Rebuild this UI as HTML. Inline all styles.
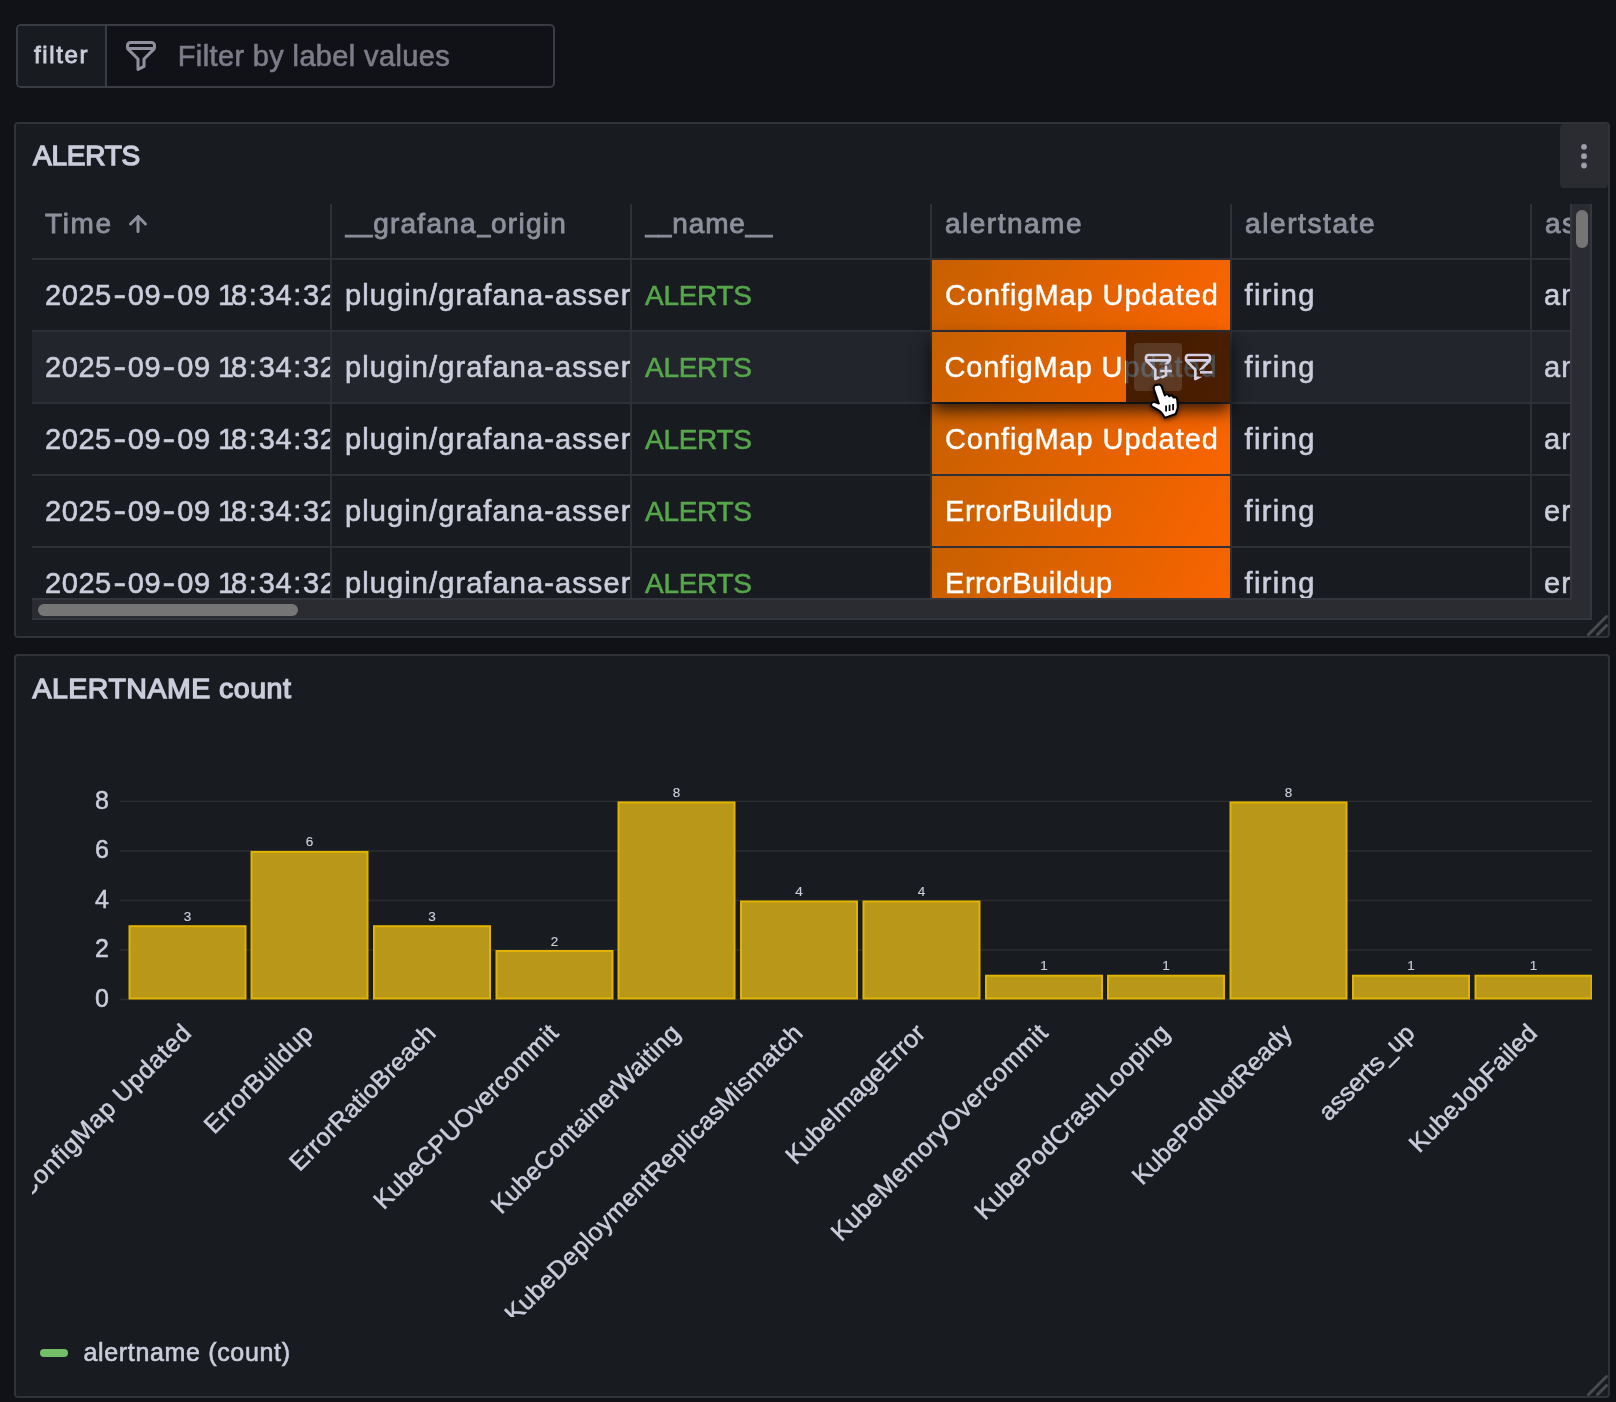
<!DOCTYPE html>
<html lang="en">
<head>
<meta charset="utf-8">
<title>ALERTS</title>
<style>
*{box-sizing:border-box;margin:0;padding:0}
html,body{width:1616px;height:1402px;overflow:hidden;background:#111217}
body{position:relative;will-change:transform;font-family:"Liberation Sans",sans-serif;color:#ccccdc}
.abs{position:absolute}
.t{position:absolute;white-space:nowrap;line-height:1;-webkit-text-stroke:0.6px currentColor}
.m{-webkit-text-stroke:0.85px currentColor}
.tt{-webkit-text-stroke:1.35px currentColor}
.or .t{-webkit-text-stroke:0.4px currentColor}
.hy{display:inline-block;transform:scaleX(1.3);margin:0 2.9px}.co{margin:0 1.2px}.n1{margin-right:-3.8px}
#fbox{left:16px;top:24px;width:539px;height:64px;border:2px solid #3a3c43;border-radius:5px;background:#111217}
#flabel{left:0;top:0;width:89px;height:60px;background:#181b1f;border-right:2px solid #3a3c43;border-radius:3px 0 0 3px}
.panel{position:absolute;left:14px;width:1596px;background:#181b1f;border:2px solid #2f3237;border-radius:4px}
#p1{top:122px;height:516px}
#p2{top:654px;height:744px}
#tbl{left:32px;top:204px;width:1538px;height:394px;overflow:hidden}
.vline{position:absolute;top:0;width:2px;height:394px;background:#2e3036}
.hline{position:absolute;left:0;width:1538px;height:2px;background:#2e3036}
.row{position:absolute;left:0;width:1538px;height:70px}
.hd{color:#8f8f9d}
.u{display:inline-block;transform:scaleX(.83);margin:0 -1.4px;position:relative;top:-2.5px}
.c{color:#ccccdc}
.cell{position:absolute;top:0;height:70px;overflow:hidden}
.g{color:#56a64b}
.or{background:linear-gradient(120deg,#c76000,#fa6400)}
.or .t{color:#fff}
</style>
</head>
<body>
<div id="fbox" class="abs">
<div id="flabel" class="abs"></div>
<div class="t m" style="left:16px;top:17px;font-size:24px;letter-spacing:1.65px;color:#ccccdc;">filter</div>
<svg class="abs" style="left:105px;top:12px" width="36" height="36" viewBox="0 0 24 24"><path fill="#8f8f9d" d="M19,2H5A3,3,0,0,0,2,5V6.17a3,3,0,0,0,.25,1.2l0,.06a2.81,2.81,0,0,0,.59.86L9,14.41V21a1,1,0,0,0,.47.85A1,1,0,0,0,10,22a1,1,0,0,0,.45-.11l4-2A1,1,0,0,0,15,19V14.41l6.12-6.12a2.81,2.81,0,0,0,.59-.86l0-.06A3,3,0,0,0,22,6.17V5A3,3,0,0,0,19,2ZM13.29,13.29A1,1,0,0,0,13,14v4.38l-2,1V14a1,1,0,0,0-.29-.71L5.41,8H18.59ZM20,6H4V5A1,1,0,0,1,5,4H19a1,1,0,0,1,1,1Z"/></svg>
<div class="t " style="left:159.8px;top:15.5px;font-size:29px;letter-spacing:0.36px;color:#7d7d8a;">Filter by label values</div>
</div>
<div id="p1" class="panel"></div>
<div class="t tt" style="left:33px;top:142px;font-size:28px;letter-spacing:-0.25px;">ALERTS</div>
<div class="abs" style="left:1560px;top:124px;width:48px;height:64px;background:#2a2c32;border-radius:4px 3px 4px 4px"></div>
<svg class="abs" style="left:1572px;top:140px" width="24" height="32" viewBox="0 0 24 32"><g fill="#9d9dab"><circle cx="12" cy="6.8" r="2.9"/><circle cx="12" cy="16.2" r="2.9"/><circle cx="12" cy="25.5" r="2.9"/></g></svg>
<div id="tbl" class="abs">
<div class="abs" style="left:0;top:128px;width:1538px;height:70px;background:#22252b"></div>
<div class="cell" style="left:0px;width:298px;height:54px"><div class="t hd m" style="left:13px;top:6px;font-size:28px;letter-spacing:1.6px;">Time</div></div>
<div class="cell" style="left:300px;width:298px;height:54px"><div class="t hd m" style="left:13px;top:6px;font-size:28px;letter-spacing:1.26px;"><span class="u">_</span><span class="u">_</span>grafana<span class="u">_</span>origin</div></div>
<div class="cell" style="left:600px;width:298px;height:54px"><div class="t hd m" style="left:13px;top:6px;font-size:28px;letter-spacing:0.85px;"><span class="u">_</span><span class="u">_</span>name<span class="u">_</span><span class="u">_</span></div></div>
<div class="cell" style="left:900px;width:298px;height:54px"><div class="t hd m" style="left:13px;top:6px;font-size:28px;letter-spacing:1.5px;">alertname</div></div>
<div class="cell" style="left:1200px;width:298px;height:54px"><div class="t hd m" style="left:13px;top:6px;font-size:28px;letter-spacing:1.6px;">alertstate</div></div>
<div class="cell" style="left:1500px;width:298px;height:54px"><div class="t hd m" style="left:13px;top:6px;font-size:28px;letter-spacing:1.4px;">asserts<span class="u">_</span>alert<span class="u">_</span>category</div></div>
<svg class="abs" style="left:88px;top:2px" width="36" height="36" viewBox="0 0 24 24"><path fill="#8f8f9d" d="M17.71,11.29l-5-5a1,1,0,0,0-.33-.21,1,1,0,0,0-.76,0,1,1,0,0,0-.33.21l-5,5a1,1,0,0,0,1.42,1.42L11,9.41V17a1,1,0,0,0,2,0V9.41l3.29,3.3a1,1,0,0,0,1.42,0A1,1,0,0,0,17.71,11.29Z"/></svg>
<div class="row" style="top:56px">
<div class="cell" style="left:0px;width:298px"><div class="t c" style="left:13px;top:21px;font-size:29px;letter-spacing:0.57px;word-spacing:-1.2px;">2025<span class="hy">-</span>09<span class="hy">-</span>09 <span class="n1">1</span>8<span class="co">:</span>34<span class="co">:</span>32</div></div>
<div class="cell" style="left:300px;width:298px"><div class="t c" style="left:13px;top:21px;font-size:29px;letter-spacing:1.1px;">plugin/grafana-asserts-app</div></div>
<div class="cell" style="left:600px;width:298px"><div class="t c g" style="left:13px;top:22px;font-size:28px;letter-spacing:-0.3px;">ALERTS</div></div>
<div class="cell or" style="left:900px;width:298px"><div class="t c" style="left:13px;top:21px;font-size:29px;letter-spacing:0.93px;">ConfigMap Updated</div></div>
<div class="cell" style="left:1200px;width:298px"><div class="t c" style="left:12.5px;top:21px;font-size:29px;letter-spacing:1.39px;">firing</div></div>
<div class="cell" style="left:1500px;width:298px"><div class="t c" style="left:12px;top:21px;font-size:29px;letter-spacing:1.2px;">amend</div></div>
</div>
<div class="row" style="top:128px">
<div class="cell" style="left:0px;width:298px"><div class="t c" style="left:13px;top:21px;font-size:29px;letter-spacing:0.57px;word-spacing:-1.2px;">2025<span class="hy">-</span>09<span class="hy">-</span>09 <span class="n1">1</span>8<span class="co">:</span>34<span class="co">:</span>32</div></div>
<div class="cell" style="left:300px;width:298px"><div class="t c" style="left:13px;top:21px;font-size:29px;letter-spacing:1.1px;">plugin/grafana-asserts-app</div></div>
<div class="cell" style="left:600px;width:298px"><div class="t c g" style="left:13px;top:22px;font-size:28px;letter-spacing:-0.3px;">ALERTS</div></div>
<div class="cell or" style="left:900px;width:298px"><div class="t c" style="left:13px;top:21px;font-size:29px;letter-spacing:0.93px;">ConfigMap Updated</div></div>
<div class="cell" style="left:1200px;width:298px"><div class="t c" style="left:12.5px;top:21px;font-size:29px;letter-spacing:1.39px;">firing</div></div>
<div class="cell" style="left:1500px;width:298px"><div class="t c" style="left:12px;top:21px;font-size:29px;letter-spacing:1.2px;">amend</div></div>
</div>
<div class="row" style="top:200px">
<div class="cell" style="left:0px;width:298px"><div class="t c" style="left:13px;top:21px;font-size:29px;letter-spacing:0.57px;word-spacing:-1.2px;">2025<span class="hy">-</span>09<span class="hy">-</span>09 <span class="n1">1</span>8<span class="co">:</span>34<span class="co">:</span>32</div></div>
<div class="cell" style="left:300px;width:298px"><div class="t c" style="left:13px;top:21px;font-size:29px;letter-spacing:1.1px;">plugin/grafana-asserts-app</div></div>
<div class="cell" style="left:600px;width:298px"><div class="t c g" style="left:13px;top:22px;font-size:28px;letter-spacing:-0.3px;">ALERTS</div></div>
<div class="cell or" style="left:900px;width:298px"><div class="t c" style="left:13px;top:21px;font-size:29px;letter-spacing:0.93px;">ConfigMap Updated</div></div>
<div class="cell" style="left:1200px;width:298px"><div class="t c" style="left:12.5px;top:21px;font-size:29px;letter-spacing:1.39px;">firing</div></div>
<div class="cell" style="left:1500px;width:298px"><div class="t c" style="left:12px;top:21px;font-size:29px;letter-spacing:1.2px;">amend</div></div>
</div>
<div class="row" style="top:272px">
<div class="cell" style="left:0px;width:298px"><div class="t c" style="left:13px;top:21px;font-size:29px;letter-spacing:0.57px;word-spacing:-1.2px;">2025<span class="hy">-</span>09<span class="hy">-</span>09 <span class="n1">1</span>8<span class="co">:</span>34<span class="co">:</span>32</div></div>
<div class="cell" style="left:300px;width:298px"><div class="t c" style="left:13px;top:21px;font-size:29px;letter-spacing:1.1px;">plugin/grafana-asserts-app</div></div>
<div class="cell" style="left:600px;width:298px"><div class="t c g" style="left:13px;top:22px;font-size:28px;letter-spacing:-0.3px;">ALERTS</div></div>
<div class="cell or" style="left:900px;width:298px"><div class="t c" style="left:13px;top:21px;font-size:29px;letter-spacing:0.55px;">ErrorBuildup</div></div>
<div class="cell" style="left:1200px;width:298px"><div class="t c" style="left:12.5px;top:21px;font-size:29px;letter-spacing:1.39px;">firing</div></div>
<div class="cell" style="left:1500px;width:298px"><div class="t c" style="left:12px;top:21px;font-size:29px;letter-spacing:1.2px;">error</div></div>
</div>
<div class="row" style="top:344px">
<div class="cell" style="left:0px;width:298px"><div class="t c" style="left:13px;top:21px;font-size:29px;letter-spacing:0.57px;word-spacing:-1.2px;">2025<span class="hy">-</span>09<span class="hy">-</span>09 <span class="n1">1</span>8<span class="co">:</span>34<span class="co">:</span>32</div></div>
<div class="cell" style="left:300px;width:298px"><div class="t c" style="left:13px;top:21px;font-size:29px;letter-spacing:1.1px;">plugin/grafana-asserts-app</div></div>
<div class="cell" style="left:600px;width:298px"><div class="t c g" style="left:13px;top:22px;font-size:28px;letter-spacing:-0.3px;">ALERTS</div></div>
<div class="cell or" style="left:900px;width:298px"><div class="t c" style="left:13px;top:21px;font-size:29px;letter-spacing:0.55px;">ErrorBuildup</div></div>
<div class="cell" style="left:1200px;width:298px"><div class="t c" style="left:12.5px;top:21px;font-size:29px;letter-spacing:1.39px;">firing</div></div>
<div class="cell" style="left:1500px;width:298px"><div class="t c" style="left:12px;top:21px;font-size:29px;letter-spacing:1.2px;">error</div></div>
</div>
<div class="hline" style="top:54px"></div>
<div class="hline" style="top:126px"></div>
<div class="hline" style="top:198px"></div>
<div class="hline" style="top:270px"></div>
<div class="hline" style="top:342px"></div>
<div class="hline" style="top:414px"></div>
<div class="vline" style="left:298px"></div>
<div class="vline" style="left:598px"></div>
<div class="vline" style="left:898px"></div>
<div class="vline" style="left:1198px"></div>
<div class="vline" style="left:1498px"></div>
<div class="abs" style="left:900px;top:128px;width:298px;height:70px;box-shadow:0 8px 16px rgba(1,4,9,.8)"></div>
<div class="cell or" style="left:900px;top:128px;width:298px"><div class="t c" style="left:12.5px;top:21px;font-size:29px;letter-spacing:0.88px;">ConfigMap Updated</div><div class="abs" style="left:194px;top:0;width:104px;height:70px;background:rgba(0,0,0,.7)"></div><div class="abs" style="left:202px;top:11px;width:48px;height:48px;border-radius:4px;background:rgba(204,204,220,.16)"></div><svg class="abs" style="left:210px;top:19px" width="32" height="32" viewBox="0 0 24 24"><defs><clipPath id="cp"><path d="M0,0H24V10.2H12.3V19.3H24V24H0Z"/></clipPath></defs><path clip-path="url(#cp)" fill="#d2d2e4" d="M19,2H5A3,3,0,0,0,2,5V6.17a3,3,0,0,0,.25,1.2l0,.06a2.81,2.81,0,0,0,.59.86L9,14.41V21a1,1,0,0,0,.47.85A1,1,0,0,0,10,22a1,1,0,0,0,.45-.11l4-2A1,1,0,0,0,15,19V14.41l6.12-6.12a2.81,2.81,0,0,0,.59-.86l0-.06A3,3,0,0,0,22,6.17V5A3,3,0,0,0,19,2ZM13.29,13.29A1,1,0,0,0,13,14v4.38l-2,1V14a1,1,0,0,0-.29-.71L5.41,8H18.59ZM20,6H4V5A1,1,0,0,1,5,4H19a1,1,0,0,1,1,1Z"/><path d="M14.4,19.9L17.4,18.6M18,10.9V19.1M13.6,15H22.4" stroke="#d2d2e4" stroke-width="1.9" fill="none"/></svg><svg class="abs" style="left:250px;top:19px" width="32" height="32" viewBox="0 0 24 24"><defs><clipPath id="cm"><path d="M0,0H24V14.3H16V13.4L12.3,15.2V19.3H24V24H0Z"/></clipPath></defs><path clip-path="url(#cm)" fill="#d2d2e4" d="M19,2H5A3,3,0,0,0,2,5V6.17a3,3,0,0,0,.25,1.2l0,.06a2.81,2.81,0,0,0,.59.86L9,14.41V21a1,1,0,0,0,.47.85A1,1,0,0,0,10,22a1,1,0,0,0,.45-.11l4-2A1,1,0,0,0,15,19V14.41l6.12-6.12a2.81,2.81,0,0,0,.59-.86l0-.06A3,3,0,0,0,22,6.17V5A3,3,0,0,0,19,2ZM13.29,13.29A1,1,0,0,0,13,14v4.38l-2,1V14a1,1,0,0,0-.29-.71L5.41,8H18.59ZM20,6H4V5A1,1,0,0,1,5,4H19a1,1,0,0,1,1,1Z"/><path d="M13.5,16H22.8" stroke="#d2d2e4" stroke-width="1.9" fill="none"/></svg></div>
</div>
<div class="abs" style="left:1570px;top:204px;width:22px;height:416px;background:#2a2c32;border-right:2px solid #33363c"></div>
<div class="abs" style="left:1570px;top:204px;width:2px;height:396px;background:#33363c"></div>
<div class="abs" style="left:1576px;top:210px;width:12px;height:38px;border-radius:6px;background:#757575"></div>
<div class="abs" style="left:32px;top:598px;width:1540px;height:22px;background:#2a2c32;border-top:2px solid #33363c"></div>
<div class="abs" style="left:32px;top:618px;width:1560px;height:2px;background:#33363c"></div>
<div class="abs" style="left:38px;top:604px;width:260px;height:12px;border-radius:6px;background:#757575"></div>
<svg class="abs" style="left:1584px;top:612px" width="26" height="26" viewBox="0 0 26 26"><g stroke="#494b51" stroke-width="3" stroke-linecap="round"><line x1="4.5" y1="22.5" x2="22.5" y2="4.5"/><line x1="13.5" y1="22.5" x2="22.5" y2="13.5"/></g></svg>
<div id="p2" class="panel"></div>
<div class="t tt" style="left:32.5px;top:674px;font-size:28.5px;letter-spacing:0.5px;">ALERTNAME count</div>
<svg class="abs" style="left:32px;top:760px;overflow:hidden" width="1560" height="557" viewBox="32 760 1560 557" font-family="Liberation Sans, sans-serif">
<rect x="120" y="998.75" width="1472" height="1.5" fill="#2b2d32"/>
<text x="109" y="1006.7" font-size="25" text-anchor="end" fill="#ccccdc" stroke="#ccccdc" stroke-width="0.5">0</text>
<rect x="120" y="949.23" width="1472" height="1.5" fill="#2b2d32"/>
<text x="109" y="957.2" font-size="25" text-anchor="end" fill="#ccccdc" stroke="#ccccdc" stroke-width="0.5">2</text>
<rect x="120" y="899.71" width="1472" height="1.5" fill="#2b2d32"/>
<text x="109" y="907.7" font-size="25" text-anchor="end" fill="#ccccdc" stroke="#ccccdc" stroke-width="0.5">4</text>
<rect x="120" y="850.19" width="1472" height="1.5" fill="#2b2d32"/>
<text x="109" y="858.1" font-size="25" text-anchor="end" fill="#ccccdc" stroke="#ccccdc" stroke-width="0.5">6</text>
<rect x="120" y="800.67" width="1472" height="1.5" fill="#2b2d32"/>
<text x="109" y="808.6" font-size="25" text-anchor="end" fill="#ccccdc" stroke="#ccccdc" stroke-width="0.5">8</text>
<rect x="129.5" y="926.2" width="116" height="72.3" fill="#b99718" stroke="#e0b400" stroke-width="2"/>
<text x="187.5" y="920.7" font-size="13.5" text-anchor="middle" fill="#ccccdc" stroke="#ccccdc" stroke-width="0.15">3</text>
<text transform="translate(187.5,1029.5) rotate(-45)" x="0" y="7.2" font-size="25" text-anchor="end" textLength="233" lengthAdjust="spacing" fill="#ccccdc" stroke="#ccccdc" stroke-width="0.5">ConfigMap Updated</text>
<rect x="251.5" y="851.9" width="116" height="146.6" fill="#b99718" stroke="#e0b400" stroke-width="2"/>
<text x="309.5" y="846.4" font-size="13.5" text-anchor="middle" fill="#ccccdc" stroke="#ccccdc" stroke-width="0.15">6</text>
<text transform="translate(309.5,1029.5) rotate(-45)" x="0" y="7.2" font-size="25" text-anchor="end" textLength="142" lengthAdjust="spacing" fill="#ccccdc" stroke="#ccccdc" stroke-width="0.5">ErrorBuildup</text>
<rect x="374.0" y="926.2" width="116" height="72.3" fill="#b99718" stroke="#e0b400" stroke-width="2"/>
<text x="432.0" y="920.7" font-size="13.5" text-anchor="middle" fill="#ccccdc" stroke="#ccccdc" stroke-width="0.15">3</text>
<text transform="translate(432.0,1029.5) rotate(-45)" x="0" y="7.2" font-size="25" text-anchor="end" textLength="194.7" lengthAdjust="spacing" fill="#ccccdc" stroke="#ccccdc" stroke-width="0.5">ErrorRatioBreach</text>
<rect x="496.5" y="951.0" width="116" height="47.5" fill="#b99718" stroke="#e0b400" stroke-width="2"/>
<text x="554.5" y="945.5" font-size="13.5" text-anchor="middle" fill="#ccccdc" stroke="#ccccdc" stroke-width="0.15">2</text>
<text transform="translate(554.5,1029.5) rotate(-45)" x="0" y="7.2" font-size="25" text-anchor="end" textLength="248.6" lengthAdjust="spacing" fill="#ccccdc" stroke="#ccccdc" stroke-width="0.5">KubeCPUOvercommit</text>
<rect x="618.5" y="802.4" width="116" height="196.1" fill="#b99718" stroke="#e0b400" stroke-width="2"/>
<text x="676.5" y="796.9" font-size="13.5" text-anchor="middle" fill="#ccccdc" stroke="#ccccdc" stroke-width="0.15">8</text>
<text transform="translate(676.5,1029.5) rotate(-45)" x="0" y="7.2" font-size="25" text-anchor="end" textLength="255" lengthAdjust="spacing" fill="#ccccdc" stroke="#ccccdc" stroke-width="0.5">KubeContainerWaiting</text>
<rect x="741.0" y="901.5" width="116" height="97.0" fill="#b99718" stroke="#e0b400" stroke-width="2"/>
<text x="799.0" y="896.0" font-size="13.5" text-anchor="middle" fill="#ccccdc" stroke="#ccccdc" stroke-width="0.15">4</text>
<text transform="translate(799.0,1029.5) rotate(-45)" x="0" y="7.2" font-size="25" text-anchor="end" textLength="409" lengthAdjust="spacing" fill="#ccccdc" stroke="#ccccdc" stroke-width="0.5">KubeDeploymentReplicasMismatch</text>
<rect x="863.5" y="901.5" width="116" height="97.0" fill="#b99718" stroke="#e0b400" stroke-width="2"/>
<text x="921.5" y="896.0" font-size="13.5" text-anchor="middle" fill="#ccccdc" stroke="#ccccdc" stroke-width="0.15">4</text>
<text transform="translate(921.5,1029.5) rotate(-45)" x="0" y="7.2" font-size="25" text-anchor="end" textLength="185" lengthAdjust="spacing" fill="#ccccdc" stroke="#ccccdc" stroke-width="0.5">KubeImageError</text>
<rect x="986.0" y="975.7" width="116" height="22.8" fill="#b99718" stroke="#e0b400" stroke-width="2"/>
<text x="1044.0" y="970.2" font-size="13.5" text-anchor="middle" fill="#ccccdc" stroke="#ccccdc" stroke-width="0.15">1</text>
<text transform="translate(1044.0,1029.5) rotate(-45)" x="0" y="7.2" font-size="25" text-anchor="end" textLength="293.8" lengthAdjust="spacing" fill="#ccccdc" stroke="#ccccdc" stroke-width="0.5">KubeMemoryOvercommit</text>
<rect x="1108.0" y="975.7" width="116" height="22.8" fill="#b99718" stroke="#e0b400" stroke-width="2"/>
<text x="1166.0" y="970.2" font-size="13.5" text-anchor="middle" fill="#ccccdc" stroke="#ccccdc" stroke-width="0.15">1</text>
<text transform="translate(1166.0,1029.5) rotate(-45)" x="0" y="7.2" font-size="25" text-anchor="end" textLength="263.7" lengthAdjust="spacing" fill="#ccccdc" stroke="#ccccdc" stroke-width="0.5">KubePodCrashLooping</text>
<rect x="1230.5" y="802.4" width="116" height="196.1" fill="#b99718" stroke="#e0b400" stroke-width="2"/>
<text x="1288.5" y="796.9" font-size="13.5" text-anchor="middle" fill="#ccccdc" stroke="#ccccdc" stroke-width="0.15">8</text>
<text transform="translate(1288.5,1029.5) rotate(-45)" x="0" y="7.2" font-size="25" text-anchor="end" textLength="214.2" lengthAdjust="spacing" fill="#ccccdc" stroke="#ccccdc" stroke-width="0.5">KubePodNotReady</text>
<rect x="1353.0" y="975.7" width="116" height="22.8" fill="#b99718" stroke="#e0b400" stroke-width="2"/>
<text x="1411.0" y="970.2" font-size="13.5" text-anchor="middle" fill="#ccccdc" stroke="#ccccdc" stroke-width="0.15">1</text>
<text transform="translate(1411.0,1029.5) rotate(-45)" x="0" y="7.2" font-size="25" text-anchor="end" textLength="123.5" lengthAdjust="spacing" fill="#ccccdc" stroke="#ccccdc" stroke-width="0.5">asserts_up</text>
<rect x="1475.5" y="975.7" width="116" height="22.8" fill="#b99718" stroke="#e0b400" stroke-width="2"/>
<text x="1533.5" y="970.2" font-size="13.5" text-anchor="middle" fill="#ccccdc" stroke="#ccccdc" stroke-width="0.15">1</text>
<text transform="translate(1533.5,1029.5) rotate(-45)" x="0" y="7.2" font-size="25" text-anchor="end" textLength="168.7" lengthAdjust="spacing" fill="#ccccdc" stroke="#ccccdc" stroke-width="0.5">KubeJobFailed</text>
</svg>
<div class="abs" style="left:40px;top:1349px;width:28px;height:8px;border-radius:4px;background:#73bf69"></div>
<div class="t " style="left:83.5px;top:1339.5px;font-size:25px;letter-spacing:0.66px;">alertname (count)</div>
<svg class="abs" style="left:1584px;top:1372px" width="26" height="26" viewBox="0 0 26 26"><g stroke="#494b51" stroke-width="3" stroke-linecap="round"><line x1="4.5" y1="22.5" x2="22.5" y2="4.5"/><line x1="13.5" y1="22.5" x2="22.5" y2="13.5"/></g></svg>
<svg class="abs" style="left:1147px;top:380px;filter:drop-shadow(0 2px 2px rgba(0,0,0,.55))" width="37" height="39" viewBox="0 0 40 42"><path d="M11.2,5.2c1.9,-0.9 3.9,0 4.7,1.9l3.4,9.6c0.5,-1.3 2.4,-1.8 3.6,-0.9c0.6,0.4 1,1 1.2,1.7c0.9,-1 2.6,-1.1 3.6,-0.2c0.5,0.4 0.8,1 1,1.6c0.9,-0.6 2.2,-0.5 3,0.3c0.6,0.6 0.9,1.4 1,2.2l0.5,6.3c0.1,1.7 -0.1,3.3 -0.7,4.9l-1.6,4.1l-11.6,4.2l-2.6,-4.2c-1,-1.6 -2.4,-2.9 -4,-3.8l-6.7,-3.9c-1.3,-0.8 -1.9,-2.3 -1.3,-3.6c0.6,-1.3 2.1,-2 3.5,-1.6l4.6,1.5l-5.3,-15.2c-0.6,-1.8 0.1,-3.9 1.7,-4.9z" fill="#fff" stroke="#000" stroke-width="2.2" stroke-linejoin="round"/><path d="M20.6,27.5v6.6M24.4,26.7v6.6M28.2,25.9v6.6" stroke="#000" stroke-width="1.9" fill="none"/></svg>
</body>
</html>
